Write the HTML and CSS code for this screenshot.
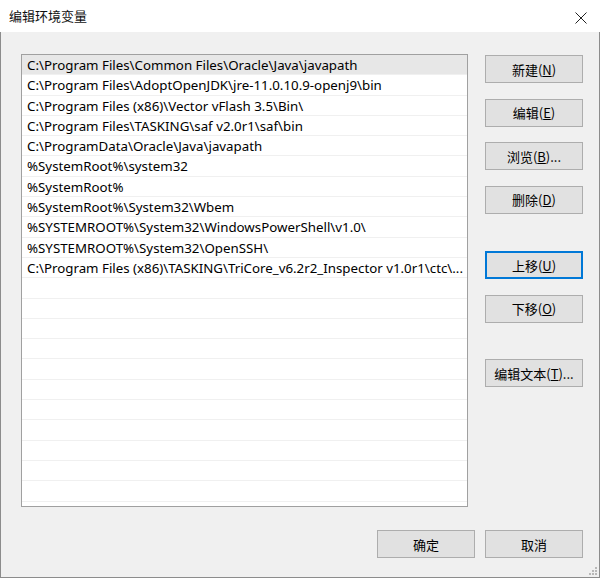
FILE: index.html
```html
<!DOCTYPE html>
<html lang="zh-CN">

<head>
    <meta charset="UTF-8">
    <title>编辑环境变量</title>
    <link rel="stylesheet" href="styles.css">
</head>

<body>
    <div class="window">
        <div class="titlebar">
            <span class="title">编辑环境变量</span>
            <svg class="close" width="12" height="12" viewBox="0 0 12 12">
                <path d="M0.5 0.5 L11.5 11.5 M11.5 0.5 L0.5 11.5" stroke="#222" stroke-width="1" fill="none" />
            </svg>
        </div>

        <div class="content">
            <div class="main">
                <div class="list" id="list">
                    <div class="row selected">C:\Program Files\Common Files\Oracle\Java\javapath</div>
                    <div class="row">C:\Program Files\AdoptOpenJDK\jre-11.0.10.9-openj9\bin</div>
                    <div class="row">C:\Program Files (x86)\Vector vFlash 3.5\Bin\</div>
                    <div class="row">C:\Program Files\TASKING\saf v2.0r1\saf\bin</div>
                    <div class="row">C:\ProgramData\Oracle\Java\javapath</div>
                    <div class="row">%SystemRoot%\system32</div>
                    <div class="row">%SystemRoot%</div>
                    <div class="row">%SystemRoot%\System32\Wbem</div>
                    <div class="row">%SYSTEMROOT%\System32\WindowsPowerShell\v1.0\</div>
                    <div class="row">%SYSTEMROOT%\System32\OpenSSH\</div>
                    <div class="row">C:\Program Files (x86)\TASKING\TriCore_v6.2r2_Inspector v1.0r1\ctc\...</div>
                </div>

                <div class="side">
                    <button class="btn">新建(<u>N</u>)</button>
                    <button class="btn">编辑(<u>E</u>)</button>
                    <button class="btn">浏览(<u>B</u>)...</button>
                    <button class="btn">删除(<u>D</u>)</button>
                    <button class="btn focused spaced">上移(<u>U</u>)</button>
                    <button class="btn">下移(<u>O</u>)</button>
                    <button class="btn spaced-sm">编辑文本(<u>T</u>)...</button>
                </div>
            </div>

            <div class="footer">
                <button class="btn">确定</button>
                <button class="btn">取消</button>
            </div>

            <svg class="grip" width="8" height="8" viewBox="0 0 8 8">
                <rect x="6" y="0" width="2" height="2" fill="#b8b8b8" />
                <rect x="3" y="3" width="2" height="2" fill="#b8b8b8" />
                <rect x="6" y="3" width="2" height="2" fill="#b8b8b8" />
                <rect x="0" y="6" width="2" height="2" fill="#b8b8b8" />
                <rect x="3" y="6" width="2" height="2" fill="#b8b8b8" />
                <rect x="6" y="6" width="2" height="2" fill="#b8b8b8" />
            </svg>
        </div>
    </div>

    <script>
        // fill the rest of the list with empty rows
        const list = document.getElementById('list');
        for (let i = list.children.length; i < 24; i++) {
            const row = document.createElement('div');
            row.className = 'row';
            list.appendChild(row);
        }
    </script>
</body>

</html>
```

FILE: styles.css
```css
* {
    box-sizing: border-box;
    margin: 0;
    padding: 0;
}

body {
    background-color: #f0f0f0;
    font-family: 'Noto Sans', 'Noto Sans CJK SC', sans-serif;
    font-size: 13px;
    color: #000;
}

.window {
    width: 600px;
    height: 578px;
    display: flex;
    flex-direction: column;
}

.titlebar {
    height: 32px;
    background: #fff;
    display: flex;
    align-items: center;
    justify-content: space-between;
    padding: 0 13px 0 9px;
}

.title {
    font-family: 'Noto Sans CJK SC', sans-serif;
    font-size: 13px;
    color: #111;
    margin-top: -1px;
}

.close {
    margin-top: 4px;
}

.content {
    flex: 1;
    position: relative;
    background: #f0f0f0;
    border: 1px solid #8c8c8c;
    border-top: none;
    padding: 22px 16px 0 20px;
}

.main {
    display: flex;
}

.list {
    width: 447px;
    height: 453px;
    background: #fff;
    border: 1px solid #a0a0a0;
    overflow: hidden;
}

.row {
    height: 20.3px;
    line-height: 21px;
    padding-left: 5px;
    border-bottom: 1px solid #f0f0f0;
    white-space: nowrap;
    overflow: hidden;
    font-size: 13.3px;
}

.row.selected {
    background: #e7e7e7;
}

.side {
    margin-left: 17px;
    padding-top: 1px;
    display: flex;
    flex-direction: column;
    gap: 15.6px;
}

.btn {
    width: 98px;
    height: 28px;
    background: #e1e1e1;
    border: 1px solid #adadad;
    font-family: 'Noto Sans CJK SC', sans-serif;
    font-size: 13px;
    color: #000;
}

.btn u {
    text-underline-offset: 1px;
}

.btn.focused {
    border: 2px solid #0078d7;
}

.btn.spaced {
    margin-top: 22px;
}

.btn.spaced-sm {
    margin-top: 20.5px;
}

.footer {
    display: flex;
    justify-content: flex-end;
    gap: 10px;
    margin-top: 23px;
}

.grip {
    position: absolute;
    right: 2px;
    bottom: 2px;
}
```
